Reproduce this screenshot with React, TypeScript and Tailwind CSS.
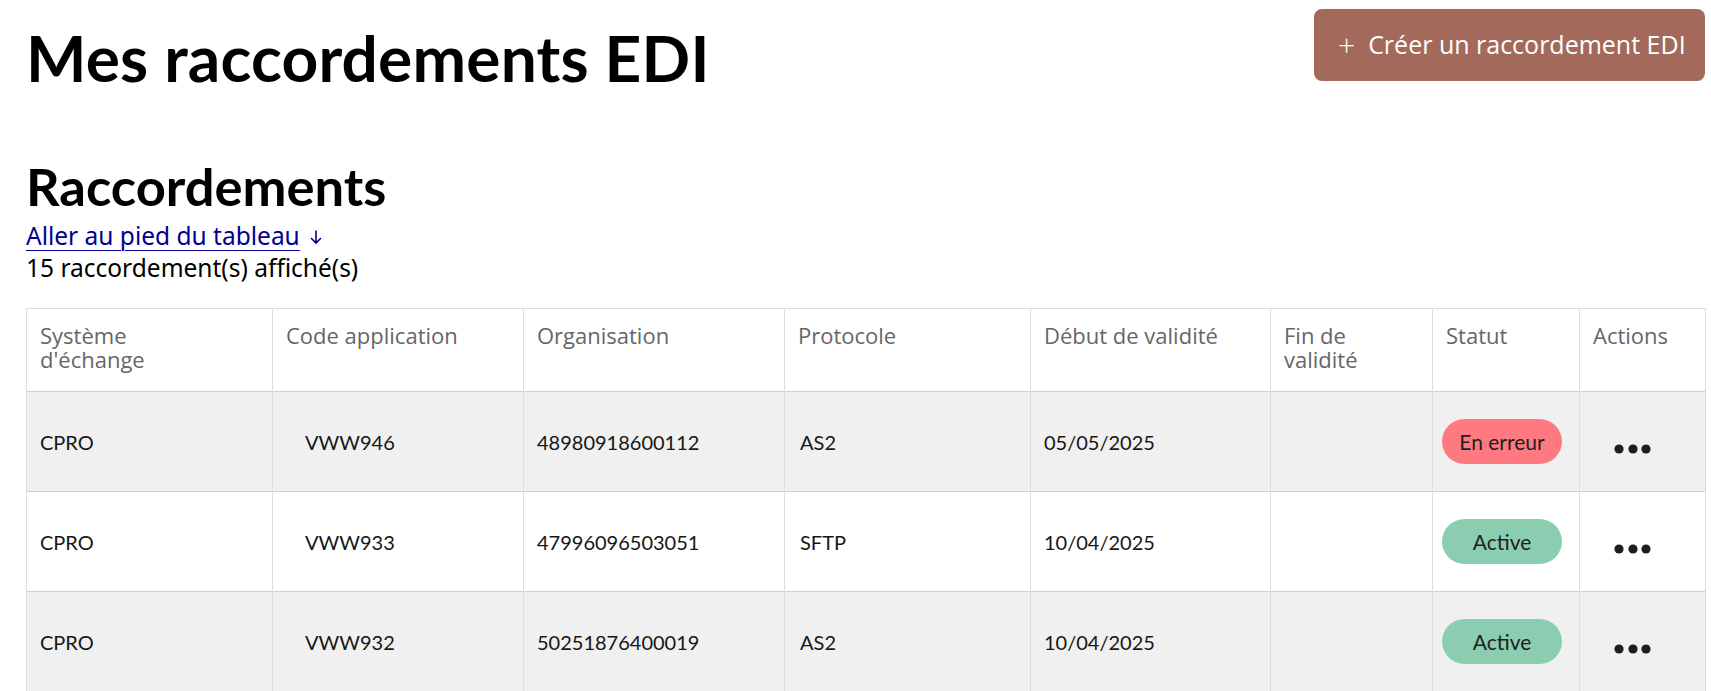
const rows = [
  { systeme: 'CPRO', code: 'VWW946', org: '48980918600112', protocole: 'AS2', debut: '05/05/2025', fin: '', statut: 'error' },
  { systeme: 'CPRO', code: 'VWW933', org: '47996096503051', protocole: 'SFTP', debut: '10/04/2025', fin: '', statut: 'active' },
  { systeme: 'CPRO', code: 'VWW932', org: '50251876400019', protocole: 'AS2', debut: '10/04/2025', fin: '', statut: 'active' },
]

const HEADERS = [
  'Système\nd\'échange',
  'Code application',
  'Organisation',
  'Protocole',
  'Début de validité',
  'Fin de validité',
  'Statut',
  'Actions',
]

function StatusBadge({ statut }: { statut: string }) {
  if (statut === 'error') {
    return (
      <span className="inline-flex h-[45px] w-[120px] items-center justify-center rounded-full bg-[#ff7a80] text-[21px] text-[#1e1e1e]">
        En erreur
      </span>
    )
  }
  return (
    <span className="inline-flex h-[45px] w-[120px] items-center justify-center rounded-full bg-[#8acdb0] text-[21px] text-[#1e1e1e]">
      Active
    </span>
  )
}

function Dots() {
  return (
    <svg width="38" height="12" viewBox="0 0 38 12" className="mt-[14px]">
      <circle cx="5" cy="6" r="4.6" fill="#1e1e1e" />
      <circle cx="19" cy="6" r="4.6" fill="#1e1e1e" />
      <circle cx="32" cy="6" r="4.6" fill="#1e1e1e" />
    </svg>
  )
}

export default function App() {
  return (
    <div className="min-h-screen bg-white pl-[26px] pr-[6px] font-['Lato',sans-serif] text-[#161616]">
      <header className="flex items-start justify-between">
        <h1 className="pt-[18px] text-[64px] font-bold leading-[80px] tracking-[0.2px] text-black">
          Mes raccordements EDI
        </h1>
        <button className="mt-[9px] flex h-[72px] w-[391px] items-center gap-[13px] rounded-[8px] bg-[#a36a5b] pl-[24px] font-['Open_Sans',sans-serif] text-[25px] text-white">
          <span className="text-[30px] font-light leading-none">+</span>
          <span>Créer un raccordement EDI</span>
        </button>
      </header>

      <section className="mt-[58px]">
        <h2 className="text-[52.5px] font-bold leading-[60px] text-black">Raccordements</h2>
        <div className="mt-[4px] flex items-center font-['Noto_Sans',sans-serif] text-[24.5px] leading-[32px]">
          <a href="#pied" className="text-[#000091] underline decoration-1 underline-offset-[5px]">
            Aller au pied du tableau
          </a>
          <svg width="14" height="16" viewBox="0 0 14 16" className="ml-[9px] mt-[2px]" fill="none">
            <path d="M7 1.5v12.5M2 9l5 5 5-5" stroke="#000091" strokeWidth="1.6" />
          </svg>
        </div>
        <p className="font-['Noto_Sans',sans-serif] text-[24.5px] leading-[32px] text-black">
          15 raccordement(s) affiché(s)
        </p>

        <table className="mt-[24px] w-[1679px] table-fixed border-collapse border border-[#dddddd]">
          <colgroup>
            <col className="w-[246px]" />
            <col className="w-[251px]" />
            <col className="w-[261px]" />
            <col className="w-[246px]" />
            <col className="w-[240px]" />
            <col className="w-[162px]" />
            <col className="w-[147px]" />
            <col className="w-[126px]" />
          </colgroup>
          <thead>
            <tr className="h-[83px] border-b border-[#d0d0d0]">
              {HEADERS.map((h) => (
                <th
                  key={h}
                  className="whitespace-pre-line border-x border-[#dddddd] px-[13px] pt-[14px] align-top text-left font-['Open_Sans',sans-serif] text-[22px] font-normal leading-[24px] text-[#666666]"
                >
                  {h}
                </th>
              ))}
            </tr>
          </thead>
          <tbody>
            {rows.map((r, i) => (
              <tr
                key={r.code}
                className={`h-[100px] border-b border-[#d0d0d0] text-[20px] text-[#161616] ${i % 2 === 0 ? 'bg-[#f0f0f0]' : 'bg-white'}`}
              >
                <td className="border-x border-[#dddddd] px-[13px]">{r.systeme}</td>
                <td className="border-x border-[#dddddd] pl-[32px] pr-[13px]">{r.code}</td>
                <td className="border-x border-[#dddddd] px-[13px]">{r.org}</td>
                <td className="border-x border-[#dddddd] px-[15px]">{r.protocole}</td>
                <td className="border-x border-[#dddddd] px-[13px]">{r.debut}</td>
                <td className="border-x border-[#dddddd] px-[13px]">{r.fin}</td>
                <td className="border-x border-[#dddddd] pl-[9px]">
                  <StatusBadge statut={r.statut} />
                </td>
                <td className="border-x border-[#dddddd] pl-[34px]">
                  <Dots />
                </td>
              </tr>
            ))}
          </tbody>
        </table>
      </section>
    </div>
  )
}
